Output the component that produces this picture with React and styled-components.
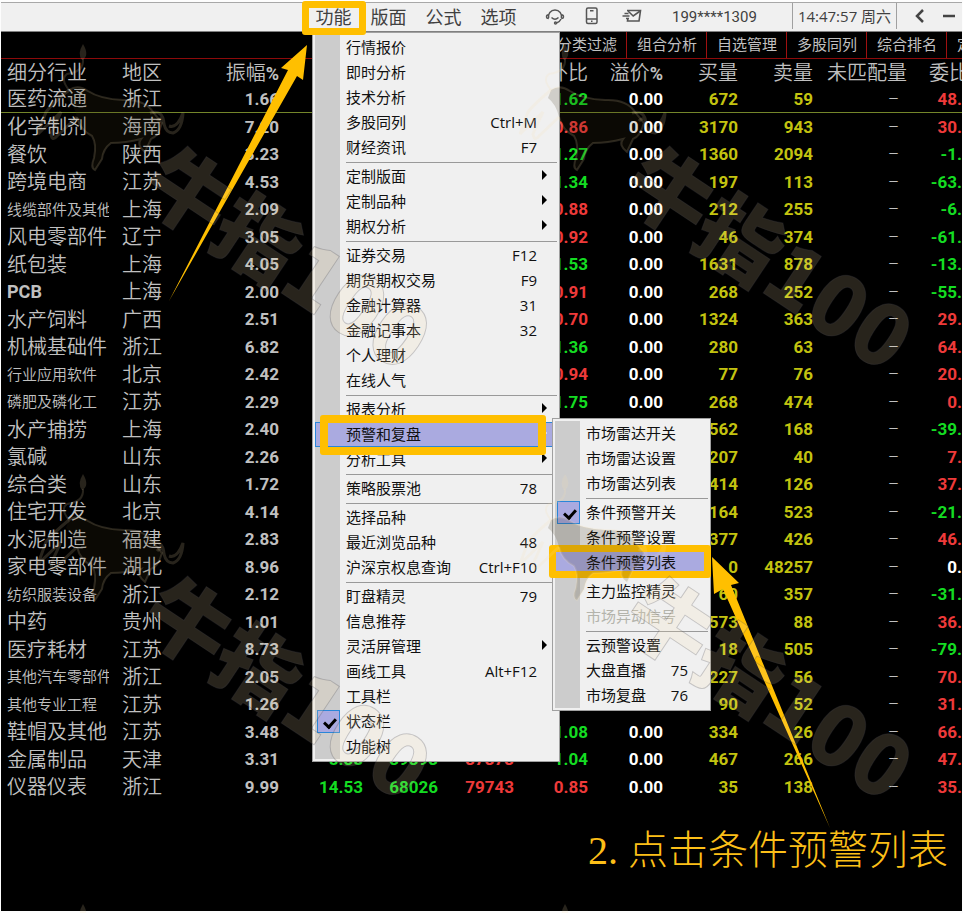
import React, { useState } from "react";
import styled, { createGlobalStyle, css } from "styled-components";

const GlobalStyle = createGlobalStyle`
  * {
    box-sizing: border-box;
  }

  body {
    margin: 0;
    background: #fdfdfd;
    font-family: "Noto Sans CJK SC", sans-serif;
  }

  button {
    font: inherit;
    color: inherit;
    border: 0;
    padding: 0;
    background: none;
  }
`;

const colors = {
  silver: "#c0c0c0",
  white: "#ffffff",
  yellow: "#c3c310",
  red: "#ee3a3a",
  green: "#14dc22",
};

const Page = styled.div`
  position: relative;
  display: flex;
  flex-direction: column;
  min-height: 100vh;
  padding: 2px 1px;
  overflow: hidden;
`;

const Toolbar = styled.header`
  display: flex;
  height: 30px;
  background: #f0f0f0;
  border-top: 1px solid #a8a8a8;
  border-bottom: 1px solid #808080;
  color: #404040;
`;

const Nav = styled.nav`
  display: flex;
  margin-left: auto;
  font-size: 18px;
`;

const NavItem = styled.div`
  position: relative;
  width: 55px;
`;

const NavButton = styled.button`
  width: 100%;
  height: 28px;
  padding-bottom: 4px;
  line-height: 24px;
`;

const Ring = styled.span`
  position: absolute;
  z-index: 3;
  inset: ${(props) => props.$inset};
  border: ${(props) => props.$size}px solid #ffbf00;
  border-radius: 3px;
  pointer-events: none;
`;

const IconGroup = styled.div`
  display: flex;
  padding-left: 10px;
`;

const IconButton = styled.button`
  display: flex;
  align-items: center;
  justify-content: center;
  width: ${(props) => props.$width}px;
  height: 26px;
`;

const Account = styled.div`
  width: 140px;
  height: 26px;
  padding-left: 19px;
  border-right: 1px solid #a0a0a0;
  font: 15px/28px Roboto, sans-serif;
`;

const Clock = styled.time`
  width: 104px;
  height: 26px;
  border-right: 1px solid #a0a0a0;
  font: 15px/26px "Open Sans", "Noto Sans CJK SC", sans-serif;
  text-align: center;
  white-space: nowrap;
`;

const WindowButtons = styled.div`
  display: flex;
  padding-left: 8px;
`;

const Board = styled.main`
  flex: 1;
  overflow: hidden;
  background: #000;
  color: ${colors.silver};
`;

const Tabs = styled.div`
  display: flex;
  justify-content: flex-end;
  height: 27px;
  border-bottom: 1px solid #8c0a0a;
`;

const Tab = styled.button`
  flex: none;
  width: ${(props) => props.$width || 80}px;
  padding: 0 0 2px 10px;
  overflow: hidden;
  border-right: 1px solid #a01010;
  font-size: 15px;
  line-height: 24px;
  text-align: left;
  white-space: nowrap;

  &:last-child {
    border-right: 0;
  }
`;

const Table = styled.table`
  width: 100%;
  table-layout: fixed;
  border-collapse: separate;
  border-spacing: 0;
`;

const HeadCell = styled.th`
  height: 27px;
  padding: 0 ${(props) => props.$right || 0}px 2px ${(props) => props.$left || 0}px;
  overflow: hidden;
  font-size: 20px;
  font-weight: 350;
  line-height: 24px;
  text-align: ${(props) => props.$align || "right"};
  white-space: nowrap;

  b {
    font: bold 18px Roboto, sans-serif;
  }
`;

const Row = styled.tr`
  height: 27px;

  &:nth-child(even) {
    height: 28px;
  }

  &:first-child td {
    border-bottom: 1px solid #74862a;
  }
`;

const TextCell = styled.td`
  padding: 0 0 2px 6px;
  font-size: ${(props) => (props.$small ? 15 : 20)}px;
  font-weight: 350;
  line-height: 24px;
  white-space: nowrap;

  span {
    display: block;
    width: 102px;
    overflow: hidden;
  }

  b {
    font: bold 18px/24px Roboto, sans-serif;
  }
`;

const NumberCell = styled.td`
  padding: 0 ${(props) => props.$right || 0}px 1px 0;
  color: ${(props) => colors[props.$tone || "silver"]};
  font: ${(props) => (props.$thin ? "300" : "bold")} 17px/24px Roboto, sans-serif;
  text-align: right;
`;

const panel = css`
  position: absolute;
  z-index: 2;
  padding: 2px;
  border: 1px solid #a0a0a0;
  background: linear-gradient(#ccc, #ccc) 2px 2px / 25px calc(100% - 4px) no-repeat #f0f0f0;
  color: #111;
  font: 15px/25px "Open Sans", "Noto Sans CJK SC", sans-serif;
`;

const Menu = styled.div`
  ${panel}
  top: calc(100% + 1px);
  left: 6px;
  width: 248px;
`;

const SubMenu = styled.div`
  ${panel}
  top: -4px;
  left: 237px;
  width: 159px;
`;

const itemStyle = css`
  display: flex;
  align-items: center;
  justify-content: space-between;
  position: relative;
  width: 100%;
  height: 25px;
  padding: 0 20px 1px 31px;
  text-align: left;
  white-space: nowrap;
`;

const ItemWrap = styled.div`
  position: relative;
`;

const ItemButton = styled.button`
  ${itemStyle}

  &:disabled {
    color: #b4b4ac;
  }

  ${(props) =>
    props.$active &&
    css`
      background: #aaaae0;
      box-shadow: inset 0 0 0 1px #2a86d8;
    `}
`;

const ItemLabel = styled.label`
  ${itemStyle}
`;

const CheckInput = styled.input`
  appearance: none;
  position: absolute;
  top: 1px;
  left: 2px;
  width: 23px;
  height: 23px;
  margin: 0;

  &:checked {
    border: 1px solid #2a86d8;
    background: #aaaae0;
  }

  &:checked::after {
    content: "";
    position: absolute;
    top: 5px;
    left: 8px;
    width: 5px;
    height: 9px;
    border: solid #000;
    border-width: 0 3px 3px 0;
    transform: rotate(42deg);
  }
`;

const Separator = styled.hr`
  height: 1px;
  margin: 2px 0 1px 31px;
  border: 0;
  background: #999;
`;

const Arrow = styled.span`
  width: 0;
  margin-right: -10px;
  margin-bottom: 3px;
  border: 5px solid transparent;
  border-left-color: ${(props) => (props.$light ? "#fff" : "#000")};
  border-right-width: 0;
`;

const Overlay = styled.svg`
  position: absolute;
  z-index: ${(props) => props.$level};
  inset: 0;
  width: 100%;
  height: 100%;
  pointer-events: none;
`;

const Caption = styled.p`
  position: absolute;
  z-index: 4;
  right: 15px;
  bottom: 37px;
  margin: 0;
  color: #fcbf18;
  font-size: 40px;
  font-weight: 300;
  line-height: 50px;

  span {
    margin-right: 10px;
    font-family: "Liberation Serif", serif;
  }
`;

const tabs = ["分类过滤", "组合分析", "自选管理", "多股同列", "综合排名"];

// industry, region, swing, ratio, premium, buy, sell, order ratio
const rows = [
  ["医药流通", "浙江", "1.66", "1.62", "0.00", "672", "59", "48."],
  ["化学制剂", "海南", "7.20", "0.86", "0.00", "3170", "943", "30."],
  ["餐饮", "陕西", "3.23", "1.27", "0.00", "1360", "2094", "-1."],
  ["跨境电商", "江苏", "4.53", "1.34", "0.00", "197", "113", "-63."],
  ["线缆部件及其他", "上海", "2.09", "0.88", "0.00", "212", "255", "-6."],
  ["风电零部件", "辽宁", "3.05", "0.92", "0.00", "46", "374", "-61."],
  ["纸包装", "上海", "4.05", "1.53", "0.00", "1631", "878", "-13."],
  ["PCB", "上海", "2.00", "0.91", "0.00", "268", "252", "-55."],
  ["水产饲料", "广西", "2.51", "0.70", "0.00", "1324", "363", "29."],
  ["机械基础件", "浙江", "6.82", "1.36", "0.00", "280", "63", "64."],
  ["行业应用软件", "北京", "2.42", "0.94", "0.00", "77", "76", "20."],
  ["磷肥及磷化工", "江苏", "2.29", "1.75", "0.00", "268", "474", "0."],
  ["水产捕捞", "上海", "2.40", "", "", "562", "168", "-39."],
  ["氯碱", "山东", "2.26", "", "", "207", "40", "7."],
  ["综合类", "山东", "1.72", "", "", "414", "126", "37."],
  ["住宅开发", "北京", "4.14", "", "", "164", "523", "-21."],
  ["水泥制造", "福建", "2.83", "", "", "377", "426", "46."],
  ["家电零部件", "湖北", "8.96", "", "", "0", "48257", "0.", "white"],
  ["纺织服装设备", "浙江", "2.12", "", "", "60", "357", "-31."],
  ["中药", "贵州", "1.01", "", "", "573", "88", "36."],
  ["医疗耗材", "江苏", "8.73", "", "", "18", "505", "-79."],
  ["其他汽车零部件", "浙江", "2.05", "", "", "227", "56", "70."],
  ["其他专业工程", "江苏", "1.26", "", "", "90", "52", "31."],
  ["鞋帽及其他", "江苏", "3.48", "1.08", "0.00", "334", "26", "66."],
  ["金属制品", "天津", "3.31", "1.04", "0.00", "467", "266", "47."],
  ["仪器仪表", "浙江", "9.99", "0.85", "0.00", "35", "138", "35."],
];

const trades = {
  金属制品: ["8.38", "39393", "37373"],
  仪器仪表: ["14.53", "68026", "79743"],
};

const menu = [
  { label: "行情报价" },
  { label: "即时分析" },
  { label: "技术分析" },
  { label: "多股同列", keys: "Ctrl+M" },
  { label: "财经资讯", keys: "F7" },
  null,
  { label: "定制版面", more: true },
  { label: "定制品种", more: true },
  { label: "期权分析", more: true },
  null,
  { label: "证券交易", keys: "F12" },
  { label: "期货期权交易", keys: "F9" },
  { label: "金融计算器", keys: "31" },
  { label: "金融记事本", keys: "32" },
  { label: "个人理财" },
  { label: "在线人气" },
  null,
  { label: "报表分析", more: true },
  {
    label: "预警和复盘",
    more: true,
    ring: "-7px 11px -8px 5px",
    ringSize: 8,
    items: [
      { label: "市场雷达开关" },
      { label: "市场雷达设置" },
      { label: "市场雷达列表" },
      null,
      { label: "条件预警开关", check: true },
      { label: "条件预警设置" },
      { label: "条件预警列表", ring: "-5px -3px -3px -6px", ringSize: 7 },
      null,
      { label: "主力监控精灵" },
      { label: "市场异动信号", disabled: true },
      null,
      { label: "云预警设置" },
      { label: "大盘直播", keys: "75" },
      { label: "市场复盘", keys: "76" },
    ],
  },
  { label: "分析工具", more: true },
  null,
  { label: "策略股票池", keys: "78" },
  null,
  { label: "选择品种" },
  { label: "最近浏览品种", keys: "48" },
  { label: "沪深京权息查询", keys: "Ctrl+F10" },
  null,
  { label: "盯盘精灵", keys: "79" },
  { label: "信息推荐" },
  { label: "灵活屏管理", more: true },
  { label: "画线工具", keys: "Alt+F12" },
  { label: "工具栏" },
  { label: "状态栏", check: true },
  { label: "功能树" },
];

const CheckItem = ({ label }) => {
  const [checked, setChecked] = useState(true);

  return (
    <ItemLabel>
      <CheckInput
        type="checkbox"
        checked={checked}
        onChange={() => setChecked(!checked)}
      />
      {label}
    </ItemLabel>
  );
};

const MenuItems = ({ items }) =>
  items.map((item, index) => {
    if (!item) return <Separator key={index} />;
    if (item.check) return <CheckItem key={index} label={item.label} />;
    return (
      <ItemWrap key={index}>
        <ItemButton type="button" disabled={item.disabled} $active={item.ring}>
          {item.label}
          {item.keys && <span>{item.keys}</span>}
          {item.more && <Arrow $light={item.ring} />}
        </ItemButton>
        {item.ring && <Ring $inset={item.ring} $size={item.ringSize} />}
        {item.items && (
          <SubMenu>
            <MenuItems items={item.items} />
          </SubMenu>
        )}
      </ItemWrap>
    );
  });

const HeadsetIcon = () => (
  <svg width="20" height="20" viewBox="0 0 20 20" fill="none" stroke="#555" strokeWidth="1.4">
    <path d="M3.6 12.2A6.6 6.6 0 1 1 16.400 12.200" />
    <path d="M3.600 8.800Q1.500 9 1.500 10.800Q1.500 12.600 3.800 12.600M16.400 8.800Q18.500 9 18.500 10.800Q18.500 12.600 16.200 12.600" />
    <path d="M6.500 11.500q3.500 3.400 7 0" />
    <path d="M16 13q-1.200 3-4.500 4" />
    <circle cx="10.500" cy="17" r="1" />
  </svg>
);

const PhoneIcon = () => (
  <svg width="14" height="20" viewBox="0 0 14 20" fill="none" stroke="#555" strokeWidth="1.5">
    <rect x="1.500" y="2" width="10.500" height="15.500" rx="1.500" />
    <path d="M1.500 13h10.500M5 4.800h3.500M6 15.300h1.500" />
  </svg>
);

const MailIcon = () => (
  <svg width="22" height="20" viewBox="0 0 22 20" fill="none" stroke="#555" strokeWidth="1.6">
    <path d="M6 4.500h13.500l-1.500 10.500H6.500l.3-2" />
    <path d="M7 5l5.200 5 7-5" />
    <path d="M3.500 7.500h4M1.500 10h7M5 12.500h3" />
  </svg>
);

const Watermark = () => (
  <Overlay $level={5} aria-hidden="true">
    <defs>
      <pattern id="mark" width="482" height="430" patternUnits="userSpaceOnUse">
        <g fill="#fae1af" fillOpacity="0.16" stroke="#3c3c46" strokeOpacity="0.24">
          <text
            transform="translate(136 196) rotate(33.700)"
            fontFamily="Noto Sans CJK SC"
            fontSize="84"
            fontWeight="900"
          >
            牛指100
          </text>
        </g>
        <path
          d="M69 90Q78 84 88 91Q100 99 123 100Q145 99 153 112L162 123Q158 137 151 139L145 152Q136 145 141 139Q126 143 111 143Q103 149 102 159L95 170Q90 168 94 158Q97 144 92 136Q80 130 77 117Q74 104 66 98Z"
          fill="#3c3214"
          fillOpacity="0.18"
        />
        <g fill="none" stroke="#fae1af" strokeOpacity="0.16" strokeWidth="2">
          <path d="M69 90Q78 84 88 91Q100 99 123 100Q145 99 153 112L162 123Q158 137 151 139L145 152Q136 145 141 139Q126 143 111 143Q103 149 102 159L95 170Q90 168 94 158Q97 144 92 136Q80 130 77 117" />
          <path d="M69 90Q52 104 46 112L38 134L61 112L51 134Q52 142 57 136L77 117" strokeWidth="3" />
          <path d="M69 90Q60 79 67 74Q84 72 83 59" />
          <path d="M150 113Q163 109 164 124Q166 133 173 133Q182 130 183 113Q177 129 169 126M164 120Q160 117 157 121" strokeWidth="3" />
        </g>
        <path d="M83 44Q77 54 82 60Q90 56 83 44Z" fill="#fae1af" fillOpacity="0.16" />
      </pattern>
    </defs>
    <rect width="100%" height="100%" fill="url(#mark)" />
  </Overlay>
);

const Quote = ({ row }) => {
  const [name, region, swing, ratio, premium, buy, sell, order, tone] = row;
  const [price = "", volume = "", inner = ""] = trades[name] || [];
  const orderTone = tone || (order.startsWith("-") ? "green" : "red");
  const small = name.length > 5;

  return (
    <Row>
      <TextCell $small={small}>
        <span>{name === "PCB" ? <b>{name}</b> : name}</span>
      </TextCell>
      <TextCell>{region}</TextCell>
      <NumberCell>{swing}</NumberCell>
      <NumberCell $tone="green">{price}</NumberCell>
      <NumberCell $tone="green">{volume}</NumberCell>
      <NumberCell $tone="red">{inner}</NumberCell>
      <NumberCell $tone={ratio < 1 ? "red" : "green"}>{ratio}</NumberCell>
      <NumberCell $tone="white">{premium}</NumberCell>
      <NumberCell $tone="yellow">{buy}</NumberCell>
      <NumberCell $tone="yellow">{sell}</NumberCell>
      <NumberCell $thin $right={8}>–</NumberCell>
      <NumberCell $tone={orderTone}>{order}</NumberCell>
    </Row>
  );
};

const columns = [115, 78, 85, 84, 75, 76, 74, 75, 75, 75, 94];

export default function App() {
  return (
    <>
      <GlobalStyle />
      <Page>
        <Toolbar>
          <Nav>
            <NavItem>
              <NavButton type="button">功能</NavButton>
              <Ring $inset="-2px -5px -4px -4px" $size={7} />
              <Menu>
                <MenuItems items={menu} />
              </Menu>
            </NavItem>
            {["版面", "公式", "选项"].map((label) => (
              <NavItem key={label}>
                <NavButton type="button">{label}</NavButton>
              </NavItem>
            ))}
          </Nav>
          <IconGroup>
            <IconButton type="button" aria-label="客服" $width={38}>
              <HeadsetIcon />
            </IconButton>
            <IconButton type="button" aria-label="手机" $width={36}>
              <PhoneIcon />
            </IconButton>
            <IconButton type="button" aria-label="消息" $width={43}>
              <MailIcon />
            </IconButton>
          </IconGroup>
          <Account>199****1309</Account>
          <Clock>14:47:57 周六</Clock>
          <WindowButtons>
            <IconButton type="button" aria-label="后退" $width={30}>
              <svg width="12" height="14" fill="none" stroke="#444" strokeWidth="2.5">
                <path d="M9 1L3 7l6 6" />
              </svg>
            </IconButton>
            <IconButton type="button" aria-label="最小化" $width={27}>
              <svg width="12" height="14" fill="none" stroke="#444" strokeWidth="2.5">
                <path d="M0 7h12" />
              </svg>
            </IconButton>
          </WindowButtons>
        </Toolbar>
        <Board>
          <Tabs>
            {tabs.map((tab) => (
              <Tab type="button" key={tab}>{tab}</Tab>
            ))}
            <Tab type="button" $width={15}>定</Tab>
          </Tabs>
          <Table>
            <colgroup>
              {columns.map((width, index) => (
                <col key={index} width={width} />
              ))}
              <col />
            </colgroup>
            <thead>
              <tr>
                <HeadCell $align="left" $left={6}>细分行业</HeadCell>
                <HeadCell $align="left" $left={6}>地区</HeadCell>
                <HeadCell>振幅<b>%</b></HeadCell>
                <HeadCell />
                <HeadCell />
                <HeadCell />
                <HeadCell>外比</HeadCell>
                <HeadCell>溢价<b>%</b></HeadCell>
                <HeadCell>买量</HeadCell>
                <HeadCell>卖量</HeadCell>
                <HeadCell>未匹配量</HeadCell>
                <HeadCell $align="left" $left={22}>委比</HeadCell>
              </tr>
            </thead>
            <tbody>
              {rows.map((row) => (
                <Quote key={row[0]} row={row} />
              ))}
            </tbody>
          </Table>
        </Board>
        <Overlay $level={4} aria-hidden="true">
          <g fill="#ffbf00">
            <path d="M307 45L281 68L288 70L169 301L297 76L303 80Z" />
            <path d="M712 557L714 594L723 589L830 828L731 585L739 583Z" />
          </g>
        </Overlay>
        <Watermark />
        <Caption><span>2.</span>点击条件预警列表</Caption>
      </Page>
    </>
  );
}
